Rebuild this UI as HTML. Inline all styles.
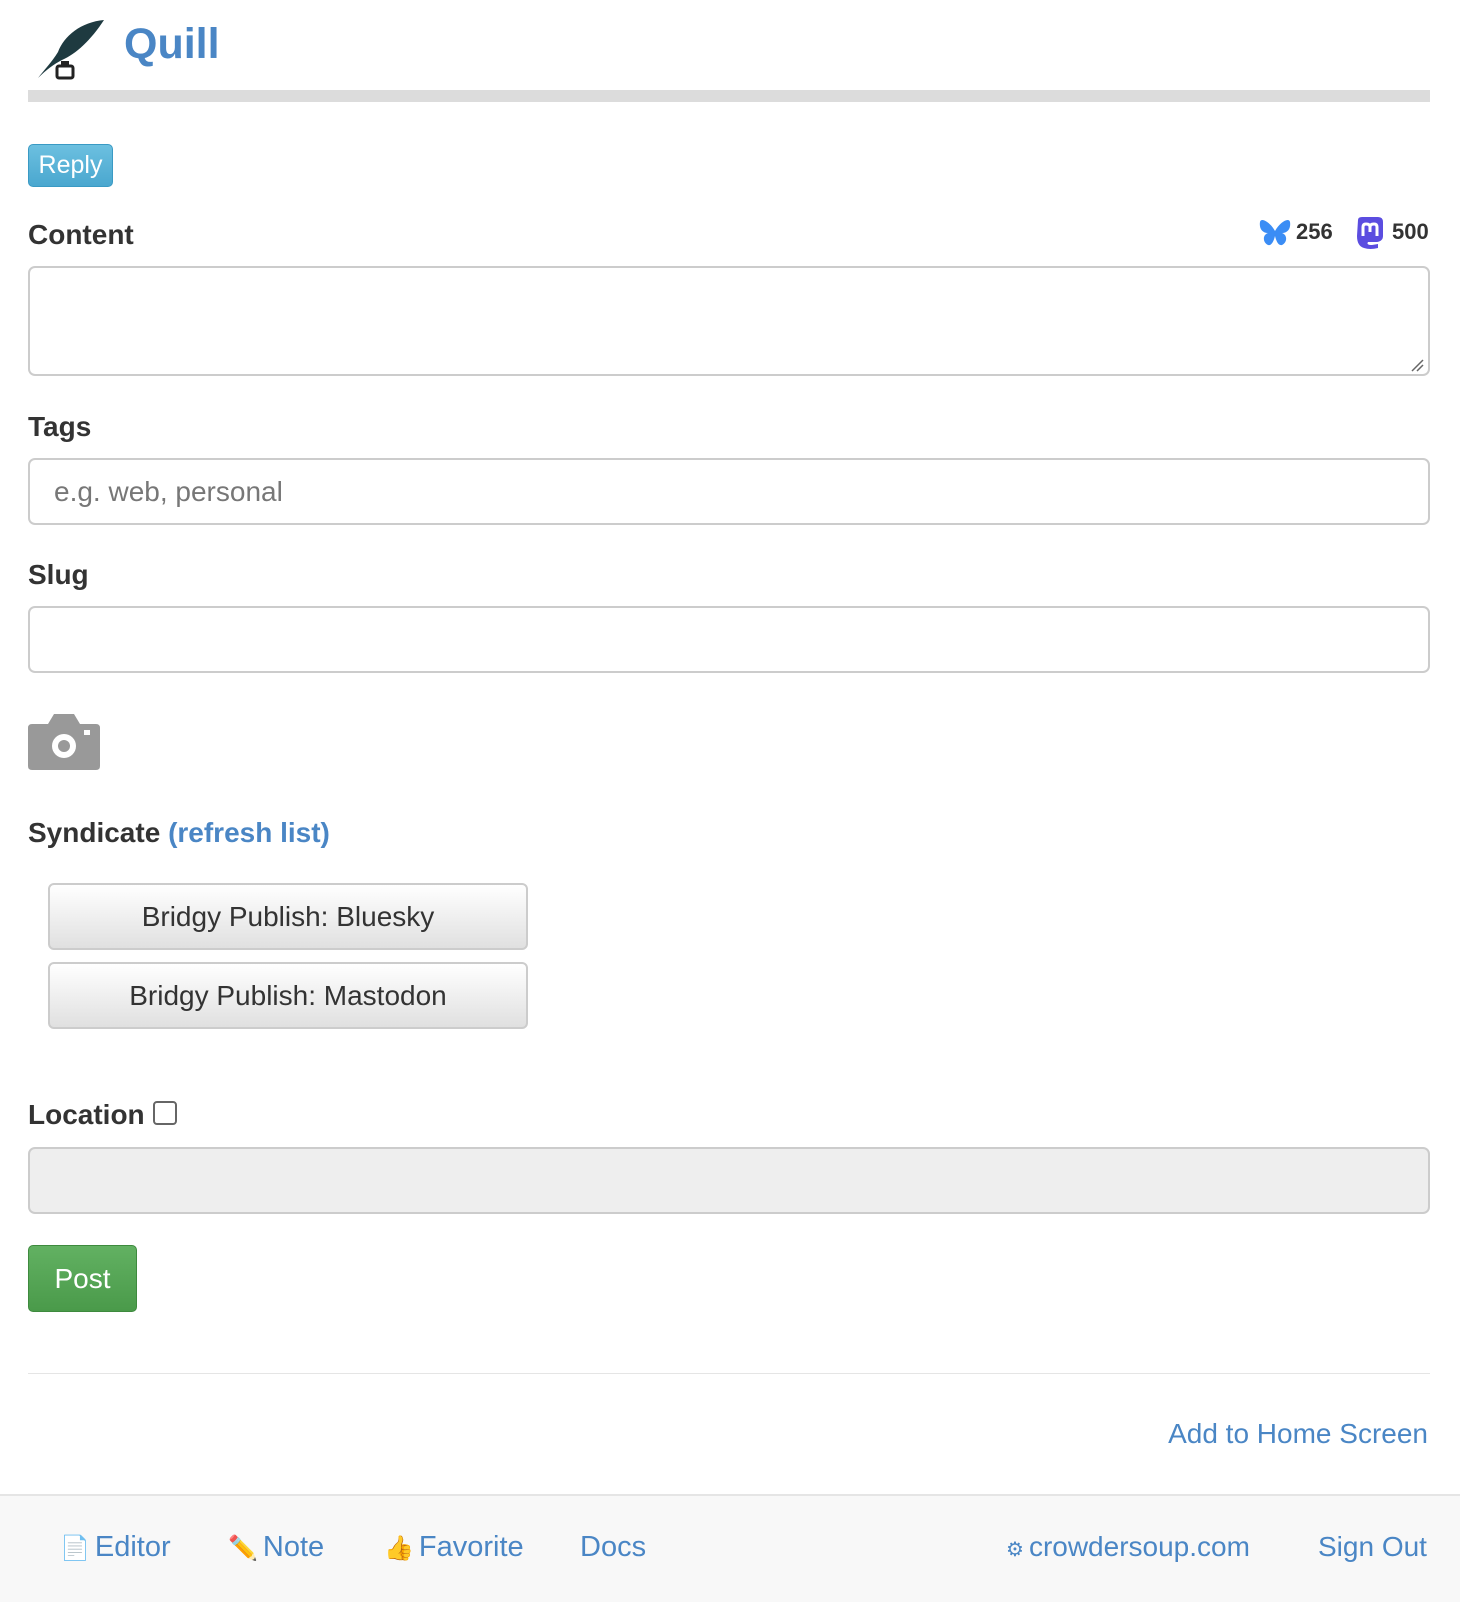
<!DOCTYPE html>
<html><head><meta charset="utf-8"><style>
body{margin:0;width:1460px;height:1600px;position:relative;font-family:"Liberation Sans",sans-serif;color:#333;background:#fff;overflow:hidden}
.a{position:absolute}
.lbl{position:absolute;left:28px;font-weight:bold;font-size:28px;line-height:30px}
.inp{position:absolute;left:28px;width:1402px;border:2px solid #ccc;border-radius:7px;background:#fff;box-sizing:border-box}
.sb{position:absolute;left:48px;width:480px;height:67px;border:2px solid #ccc;border-radius:6px;background:linear-gradient(#fff,#e0e0e0);box-sizing:border-box;text-align:center;font-size:28px;line-height:63px;color:#333}
.f{position:absolute;top:1530px;font-size:29px;color:#4a86c5;line-height:34px;white-space:nowrap}
.f i{font-style:normal;font-size:24px;margin-right:5px}
</style></head><body>
<svg class="a" style="left:36px;top:18px" width="70" height="62" viewBox="0 0 70 62">
<path d="M68 2 C45 4 28 18 22 34 C16 44 8 52 2 60 C10 52 18 46 26 42 C40 36 55 22 68 2Z" fill="#1e3a40"/>
<rect x="21" y="48" width="16" height="12" rx="2" fill="none" stroke="#222" stroke-width="3"/>
<rect x="25" y="43" width="8" height="6" fill="#222"/>
</svg>
<div class="a" style="left:124px;top:18px;font-size:43px;font-weight:bold;color:#4a86c5;line-height:52px">Quill</div>
<div class="a" style="left:28px;top:90px;width:1402px;height:12px;background:#dcdcdc"></div>
<div class="a" style="left:28px;top:144px;width:85px;height:43px;border-radius:5px;background:linear-gradient(#6cc0e0,#4aa7cf);border:1px solid #3a9ac4;box-sizing:border-box;color:#fff;font-size:25px;line-height:41px;text-align:center">Reply</div>
<div class="lbl" style="top:220px">Content</div>
<svg class="a" style="left:1258px;top:218px" width="34" height="30" viewBox="0 0 34 30"><path d="M17 13 C12 4 3 -1 2 4 C1 10 4 15 10 15 C4 17 5 25 10 27 C14 28 16 22 17 18 C18 22 20 28 24 27 C29 25 30 17 24 15 C30 15 33 10 32 4 C31 -1 22 4 17 13Z" fill="#3b8df5"/></svg>
<div class="a" style="left:1296px;top:218px;font-size:22px;font-weight:bold;line-height:28px">256</div>
<svg class="a" style="left:1354px;top:216px" width="32" height="34" viewBox="0 0 32 34"><path d="M4 4 Q4 1 8 1 H24 Q29 1 29 6 V20 Q29 25 23 26 H14 Q12 29 18 29 L24 28 V32 Q16 34 10 32 Q3 30 3 20Z" fill="#5b4de0"/><path d="M9 20 V11 Q9 8 12 8 Q16 8 16 11 V16 M16 11 Q16 8 20 8 Q23 8 23 11 V20" stroke="#fff" stroke-width="3" fill="none"/></svg>
<div class="a" style="left:1392px;top:218px;font-size:22px;font-weight:bold;line-height:28px">500</div>
<div class="inp" style="top:266px;height:110px"></div>
<svg class="a" style="left:1410px;top:358px" width="14" height="14"><path d="M2 13 L13 2 M7 13 L13 7" stroke="#666" stroke-width="1.5"/></svg>
<div class="lbl" style="top:412px">Tags</div>
<div class="inp" style="top:458px;height:67px;font-size:28px;color:#777;padding-left:24px;line-height:63px">e.g. web, personal</div>
<div class="lbl" style="top:560px">Slug</div>
<div class="inp" style="top:606px;height:67px"></div>
<svg class="a" style="left:28px;top:710px" width="73" height="60" viewBox="0 0 73 60"><path d="M4 14 H20 L26 4 H46 L52 14 H68 Q72 14 72 18 V56 Q72 60 68 60 H4 Q0 60 0 56 V18 Q0 14 4 14Z" fill="#999"/><circle cx="36" cy="36" r="12" fill="#fff"/><circle cx="36" cy="36" r="6" fill="#999"/><rect x="56" y="20" width="6" height="5" fill="#fff"/></svg>
<div class="lbl" style="top:818px">Syndicate <span style="color:#4a86c5">(refresh list)</span></div>
<div class="sb" style="top:883px">Bridgy Publish: Bluesky</div>
<div class="sb" style="top:962px">Bridgy Publish: Mastodon</div>
<div class="lbl" style="top:1100px">Location</div>
<div class="a" style="left:153px;top:1101px;width:24px;height:24px;border:2px solid #666;border-radius:4px;box-sizing:border-box"></div>
<div class="inp" style="top:1147px;height:67px;background:#eee"></div>
<div class="a" style="left:28px;top:1245px;width:109px;height:67px;border-radius:5px;background:linear-gradient(#62b162,#4a9a4a);border:1px solid #3e8a3e;box-sizing:border-box;color:#fff;font-size:28px;line-height:65px;text-align:center">Post</div>
<div class="a" style="left:28px;top:1373px;width:1402px;height:1px;background:#e5e5e5"></div>
<div class="a" style="right:32px;top:1417px;font-size:28px;color:#4a86c5;line-height:34px">Add to Home Screen</div>
<div class="a" style="left:0;top:1494px;width:1460px;height:106px;background:#f8f8f8;border-top:2px solid #e5e5e5"></div>
<div class="f" style="left:60px"><i>📄</i>Editor</div>
<div class="f" style="left:228px"><i>✏️</i>Note</div>
<div class="f" style="left:384px"><i>👍</i>Favorite</div>
<div class="f" style="left:580px">Docs</div>
<div class="f" style="left:1006px;font-size:28px"><i style="font-size:20px">⚙</i>crowdersoup.com</div>
<div class="f" style="left:1318px;font-size:28px">Sign Out</div>
</body></html>
